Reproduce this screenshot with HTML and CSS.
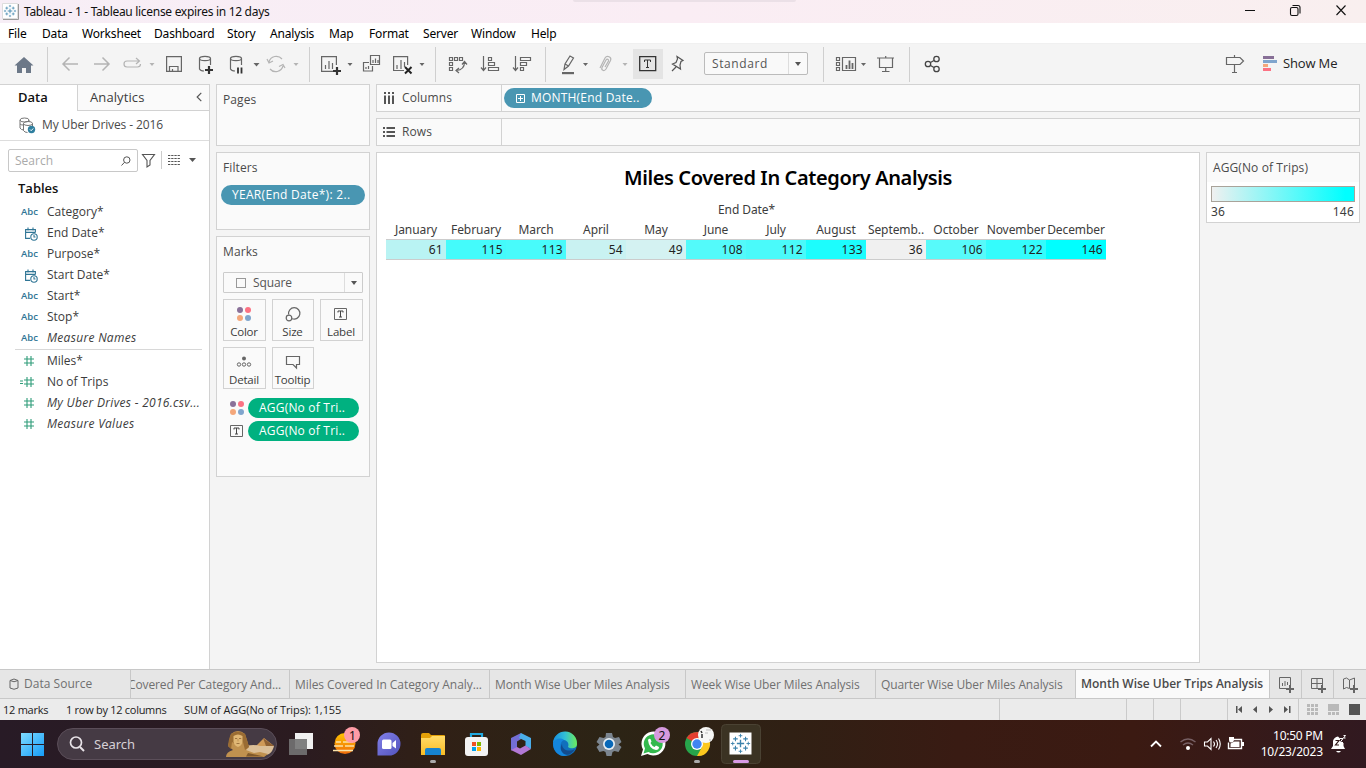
FILE: index.html
```html
<!DOCTYPE html>
<html lang="en">
<head>
<meta charset="utf-8">
<title>Tableau - 1</title>
<link rel="stylesheet" href="styles.css">
</head>
<body>
<svg class="defs" width="0" height="0">
  <defs>
    <symbol id="tableau" viewBox="0 0 24 24"><g fill="none" stroke="#3b82ac" stroke-width="1.500"><path d="M12 8v8M8 12h8"/><path d="M6.500 4.500v5M4 7h5M17.500 4.500v5M15 7h5M6.500 14.500v5M4 17h5M17.500 14.500v5M15 17h5" stroke-width="1.200"/><path d="M12 1.500v4M10 3.500h4M12 18.500v4M10 20.500h4M3.500 10v4M1.500 12h4M20.500 10v4M18.500 12h4" stroke-width="1"/></g></symbol>
    <symbol id="cal" viewBox="0 0 14 14"><g fill="none" stroke="#2f7595" stroke-width="1.100"><path d="M6 11.400H1.600V2.600h9.800v3M1.600 5.400h9.800M4 .5v3M9 .5v3"/><circle cx="10" cy="10" r="3.200"/><path d="M10 8v2h1.500"/></g></symbol>
    <symbol id="hash" viewBox="0 0 12 12"><path d="M4 1v10M8 1v10M1 4h10M1 8h10" stroke="#2f9c79" stroke-width="1.100" fill="none"/></symbol>
    <symbol id="dots" viewBox="0 0 16 16"><circle cx="4" cy="4" r="3" fill="#8a7199"/><circle cx="12" cy="4" r="3" fill="#fc7283"/><circle cx="4" cy="12" r="3" fill="#f4a77b"/><circle cx="12" cy="12" r="3" fill="#80a5cd"/></symbol>
    <symbol id="tbox" viewBox="0 0 14 12"><path d="M.5.5h12v11H.5z" fill="none" stroke="#666"/><path d="M4 4.500v-1.500h5v1.500M6.500 3v6M5 9h3" fill="none" stroke="#444"/></symbol>
  </defs>
</svg>

<header class="titlebar">
  <svg class="app-icon" viewBox="0 0 18 18"><path d="M.5.5h15v15H.5z" fill="#fff" stroke="#ddd"/><path d="M16.500 1v15.500H1" fill="none" stroke="#999"/><use href="#tableau" x="1" y="1" width="14" height="14"/></svg>
  <span class="title">Tableau - 1 - Tableau license expires in 12 days</span>
  <i class="peek"></i>
  <svg class="win" viewBox="1230 0 136 23"><g fill="none" stroke="#111" stroke-width="1.100"><path d="M1245 10.500h10M1336.500 5.500l9 9.500M1345.500 5.500l-9 9.500"/><rect x="1290.500" y="7.500" width="7.500" height="8" rx="1.500"/><path d="M1292.500 5.500h5.500q2 0 2 2v6"/></g></svg>
</header>
<nav class="menu"><span class="m1">File</span><span class="m2">Data</span><span class="m3">Worksheet</span><span class="m4">Dashboard</span><span class="m5">Story</span><span class="m6">Analysis</span><span class="m7">Map</span><span class="m8">Format</span><span class="m9">Server</span><span class="m10">Window</span><span>Help</span></nav>

<div class="toolbar">
  <svg class="tools-a" viewBox="0 43 704 41">
    <path d="M24 57l9.500 8.500H31V73h-5v-5h-4v5h-5v-7.500h-2.500z" fill="#6c7888"/>
    <path d="M47.500 47v35M309.500 47v35M435.500 47v35M545.500 47v35" stroke="#cfcfcf"/>
    <g fill="none" stroke="#b4b4b4" stroke-width="1.500">
      <path d="M78 64H63M69.500 57.500L63 64l6.500 6.500M94 64h15M102.500 57.500L109 64l-6.500 6.500"/>
      <path d="M134 67h3.500a3 3 0 0 0 3-3M127 67a3 3 0 0 1 0-6h12M136 58l3.500 3-3.500 3M127 67h8" stroke-width="1.200"/>
      <path d="M269 62a7.500 7.500 0 0 1 13-3M283 66a7.500 7.500 0 0 1-13 3M267 59l2 4 4-2M285 68l-2-3.500-4 2" stroke-width="1.200"/>
    </g>
    <g fill="#b4b4b4"><path d="M149.500 63h5l-2.500 3zM293.500 63h5l-2.500 3zM622.500 63h5l-2.500 3z"/></g>
    <g fill="#666"><path d="M253.500 63h6l-3 3.500zM347.500 63h5l-2.500 3zM419.500 63h5l-2.500 3zM583 63h5l-2.500 3z"/></g>
    <g fill="none" stroke="#666" stroke-width="1.200">
      <path d="M166.600 56.600h14.800v14.800h-14.800zM169.500 71v-4.500h8.500V71M172.500 69v2"/>
      <ellipse cx="205" cy="58.500" rx="5.500" ry="2.200"/><path d="M199.500 58.500V69q1 2 4.500 2M210.500 58.500V65"/>
      <ellipse cx="236" cy="58.500" rx="5.500" ry="2.200"/><path d="M230.500 58.500V69q1 2 4.500 2M241.500 58.500V65"/>
      <path d="M334 71.400h-12.400V56.600h14.800V65M325.500 65v4M329 61v8M332.500 63v6"/>
      <path d="M370.500 55.500h9v9h-9zM369 62.500h-5.500v8.500h9V66M373 60v3M375.500 58.500V63M378 60v3M366 67v2M368.500 66v3"/>
      <path d="M404 70.500H393.600V56.600h14V65M397 65v4M401 60v9M404.500 62v5"/>
      <path d="M449.500 57.500h3v3h-3zM454.500 57.500h3v3h-3zM459.500 57.500h3v3h-3zM449.500 62.500h3v3h-3zM449.500 67.500h3v3h-3zM464.500 62c0 5-2 8-8 8.500M462 64.500l2.500-3 2.500 3M459 68l-3 2.500 3 2.500"/>
      <path d="M483.500 56v14M481 67.500l2.500 3 2.500-3M488.500 57.500h3v3h-3zM488.500 62.500h6v3h-6zM488.500 67.500h10v3h-10z"/>
      <path d="M515.500 56v14M513 67.500l2.500 3 2.500-3M520.500 57.500h10v3h-10zM520.500 62.500h6v3h-6zM520.500 67.500h3v3h-3z"/>
      <path d="M564 69.500l1-5.500 5-8 3.500 2-5 8zM565 64l3.500 2"/>
      <path d="M600 68l5-10c2-3 7-1 5.500 2.500L606 69c-2 3-5 1-4-1.500l4-7.500c1-1.500 3-.5 2.500 1L605 67" stroke="#b4b4b4"/>
    </g>
    <path d="M562 72h12v2.200h-12z" fill="#666"/>
    <path d="M205 70h8M209 66v8M333 71h8M337 67v8" stroke="#333" stroke-width="2.200"/>
    <path d="M238 67.500v6M241.500 67.500v6" stroke="#333" stroke-width="1.800"/>
    <path d="M405 67l6.500 6.500M411.500 67l-6.500 6.500" stroke="#222" stroke-width="2"/>
    <path d="M633 49h30v30h-30z" fill="#e4e4e4"/>
    <path d="M639.700 56.700h16v14h-16z" fill="none" stroke="#333" stroke-width="1.300"/>
    <path d="M644.500 62v-2h6v2M647.500 60v7.500M646 67.500h3" fill="none" stroke="#333"/>
    <path d="M677 56.500l6 4-2 1-1 3.500.5 4-8-5 3.500-1.500 1.500-3.500zM676 67L672 71" fill="none" stroke="#555" stroke-width="1.200"/>
  </svg>
  <div class="fit"><span>Standard</span><b></b></div>
  <svg class="tools-b" viewBox="808 43 455 41">
    <path d="M823.500 47v35M909.500 47v35" stroke="#cfcfcf"/>
    <g fill="none" stroke="#666" stroke-width="1.200"><path d="M836.500 57.500h3v3h-3zM836.500 62.500h3v3h-3zM836.500 67.500h3v3h-3zM842.500 57.500h13v13h-13z"/><path d="M846.500 65v4M849.500 60.500V69M852.500 63v6" stroke-width="1.800"/><path d="M877 58h17M879.500 58v9.500h13V58M885.700 67.500v4M882 71.500h7.500M885.700 56v2"/><path d="M1226.500 57.500h13.500l3.500 3.500-3.500 3.500h-13.500zM1234.500 55v2.500M1234.500 64.500v8M1232 72.500h5"/></g>
    <path d="M861 63h5l-2.500 3z" fill="#666"/>
    <g fill="none" stroke="#444" stroke-width="1.300"><circle cx="928" cy="64" r="2.700"/><circle cx="936.500" cy="59" r="2.700"/><circle cx="936.500" cy="69" r="2.700"/><path d="M930.500 62.500l3.500-2M930.500 65.500l3.500 2"/></g>
  </svg>
  <svg class="showme-icon" viewBox="0 0 15 15"><path d="M0 0h11v3H0z" fill="#876f96"/><path d="M0 4h14v3H0z" fill="#80a5cd"/><path d="M0 8h5v3H0z" fill="#f4a77b"/><path d="M0 12h8v3H0z" fill="#fc7283"/></svg>
  <span class="showme">Show Me</span>
</div>

<main class="work">
  <aside class="data">
    <div class="side-tabs"><b>Data</b><span>Analytics</span><svg viewBox="0 0 8 12"><path d="M6.500 1L2 5.500l4.500 4.500" fill="none" stroke="#555" stroke-width="1.300"/></svg></div>
    <div class="source"><svg viewBox="0 0 17 17"><g fill="none" stroke="#777"><ellipse cx="5.500" cy="3" rx="4.500" ry="2"/><path d="M1 3v8q1 2 4 2M10 3v2"/><ellipse cx="9" cy="6.500" rx="4.500" ry="2"/><path d="M4.500 6.500v7q1 2 4 2M13.500 6.500v3M1 7q1 1 3 1"/></g><circle cx="12.500" cy="12.500" r="3.700" fill="#2f7f9f"/><path d="M11 12.500l1.200 1.200 2-2.200" fill="none" stroke="#fff"/></svg><span>My Uber Drives - 2016</span></div>
    <div class="find">
      <div class="box"><span>Search</span><svg viewBox="0 0 10 10"><circle cx="5.800" cy="4" r="3.200" fill="none" stroke="#555"/><path d="M3.500 6.300L.5 9.500" stroke="#555"/></svg></div>
      <svg class="find-icons" viewBox="138 149 60 23"><path d="M142.500 154.500h12l-4.500 6v4.500l-3 2v-6.500z" fill="none" stroke="#555" stroke-width="1.100"/><path d="M161.500 151v18" stroke="#ccc"/><path d="M168 155.500h12M168 158.500h12M168 161.500h12M168 164.500h12" stroke="#555" stroke-dasharray="2.300 .9"/><path d="M189 158h7l-3.500 4z" fill="#555"/></svg>
    </div>
    <h2>Tables</h2>
    <ul class="fields">
      <li><em>Abc</em><span>Category*</span></li>
      <li><svg class="cal"><use href="#cal"/></svg><span>End Date*</span></li>
      <li><em>Abc</em><span>Purpose*</span></li>
      <li><svg class="cal"><use href="#cal"/></svg><span>Start Date*</span></li>
      <li><em>Abc</em><span>Start*</span></li>
      <li><em>Abc</em><span>Stop*</span></li>
      <li><em>Abc</em><span class="it">Measure Names</span></li>
    </ul>
    <ul class="fields measures">
      <li><svg class="hash"><use href="#hash"/></svg><span>Miles*</span></li>
      <li><svg class="calc" viewBox="0 0 15 12"><path d="M0 5h3M0 7.500h3" stroke="#2f9c79"/><use href="#hash" x="3" width="12" height="12"/></svg><span>No of Trips</span></li>
      <li><svg class="hash"><use href="#hash"/></svg><span class="it">My Uber Drives - 2016.csv...</span></li>
      <li><svg class="hash"><use href="#hash"/></svg><span class="it">Measure Values</span></li>
    </ul>
  </aside>

  <section class="cards">
    <div class="card pages"><h3>Pages</h3></div>
    <div class="card filters"><h3>Filters</h3><div class="pill blue">YEAR(End Date*): 2..</div></div>
    <div class="card marks"><h3>Marks</h3>
      <div class="type"><i></i><span>Square</span><b></b></div>
      <div class="grid">
        <div><svg viewBox="0 0 16 16"><use href="#dots"/></svg><span>Color</span></div>
        <div><svg viewBox="0 0 16 16"><g fill="none" stroke="#666" stroke-width="1.200"><path d="M3.600 8.500a5.700 5.700 0 1 1 3.500 4.200"/><circle cx="4" cy="12" r="2.800"/></g></svg><span>Size</span></div>
        <div><svg viewBox="0 0 16 16"><use href="#tbox" x="1" y="2" width="14" height="12"/></svg><span>Label</span></div>
        <div><svg viewBox="0 0 16 16"><circle cx="8" cy="4.500" r="2" fill="#666"/><g fill="none" stroke="#666"><circle cx="3" cy="10.500" r="1.700"/><circle cx="8" cy="10.500" r="1.700"/><circle cx="13" cy="10.500" r="1.700"/></g></svg><span>Detail</span></div>
        <div><svg viewBox="0 0 16 16"><path d="M1.500 2.500h13v8h-3v3.500l-3.500-3.500H1.500z" fill="none" stroke="#666" stroke-width="1.200"/></svg><span>Tooltip</span></div>
      </div>
      <div class="enc"><svg width="16" height="16"><use href="#dots"/></svg><div class="pill green">AGG(No of Tri..</div></div>
      <div class="enc"><svg width="16" height="12"><use href="#tbox" x="1" width="14" height="12"/></svg><div class="pill green">AGG(No of Tri..</div></div>
    </div>
  </section>

  <section class="canvas">
    <div class="shelf"><div class="name"><svg viewBox="0 0 12 12"><path d="M2 0v2M2 3.500V12M6 0v2M6 3.500V12M10 0v2M10 3.500V12" stroke="#555" stroke-width="2"/></svg>Columns</div><div class="pill blue month"><svg viewBox="0 0 9 9"><path d="M.5.5h8v8h-8zM4.500 2v5M2 4.500h5" fill="none" stroke="#fff"/></svg>MONTH(End Date..</div></div>
    <div class="shelf"><div class="name"><svg viewBox="0 0 12 12"><path d="M0 2h2M3.500 2H12M0 6h2M3.500 6H12M0 10h2M3.500 10H12" stroke="#555" stroke-width="2"/></svg>Rows</div></div>
    <div class="lower">
      <div class="view">
        <h1>Miles Covered In Category Analysis</h1>
        <div class="viz">
          <p>End Date*</p>
          <div class="row heads"><span>January</span><span>February</span><span>March</span><span>April</span><span>May</span><span>June</span><span>July</span><span>August</span><span>Septemb..</span><span>October</span><span>November</span><span>December</span></div>
          <div class="row cells"><span style="background:#b9f3f3">61</span><span style="background:#44fbfb">115</span><span style="background:#48fbfb">113</span><span style="background:#c9f2f2">54</span><span style="background:#d4f2f2">49</span><span style="background:#53fafa">108</span><span style="background:#4afafa">112</span><span style="background:#1cfdfd">133</span><span style="background:#f0f0f0">36</span><span style="background:#57fafa">106</span><span style="background:#34fcfc">122</span><span style="background:#00ffff">146</span></div>
        </div>
      </div>
      <div class="legend"><h3>AGG(No of Trips)</h3><div class="scale"><i></i><div><span>36</span><span>146</span></div></div></div>
    </div>
  </section>
</main>

<div class="sheets">
  <div class="ds"><svg viewBox="0 0 10 12"><path d="M1 2.500V10q4 2.500 8 0V2.500M1 2.500Q5-.5 9 2.500 5 5 1 2.500" fill="none" stroke="#666"/></svg>Data Source</div>
  <div class="s1"><span>Covered Per Category And...</span></div>
  <div class="s2"><span>Miles Covered In Category Analy...</span></div>
  <div class="s3"><span>Month Wise Uber Miles Analysis</span></div>
  <div class="s4"><span>Week Wise Uber Miles Analysis</span></div>
  <div class="s5"><span>Quarter Wise Uber Miles Analysis</span></div>
  <div class="s6"><b>Month Wise Uber Trips Analysis</b></div>
  <div class="add"><svg viewBox="0 0 16 16"><path d="M8 11.500H1.500v-11h11V8M4.500 6v3M7 4v5M9.500 5v3" fill="none" stroke="#666"/><path d="M8 12h8M12 8v8" stroke="#666" stroke-width="2"/></svg></div>
  <div class="add"><svg viewBox="0 0 16 16"><path d="M8 11.500H1.500v-10h11V8M1.500 6.500h11M7 1.500v10" fill="none" stroke="#666"/><path d="M8 12h8M12 8v8" stroke="#666" stroke-width="2"/></svg></div>
  <div class="add"><svg viewBox="0 0 16 16"><path d="M7.500 11.500l-3-1-3 1.500V2l3-1 3 2 5-2v7M7.500 3v8.500" fill="none" stroke="#666"/><path d="M8 12h8M12 8v8" stroke="#666" stroke-width="2"/></svg></div>
</div>
<div class="status"><span class="a">12 marks</span><span class="b">1 row by 12 columns</span><span class="c">SUM of AGG(No of Trips): 1,155</span>
  <svg viewBox="999 699 367 21"><path d="M999.500 699v21M1126.500 699v21M1153.500 699v21M1180.500 699v21M1227.500 699v21M1298.500 699v21" stroke="#cacaca"/><g fill="#555"><path d="M1236 706h1.500v7h-1.500zM1242 706v7l-4-3.500zM1257 706v7l-4-3.500zM1269 706v7l4-3.500zM1284 706v7l4-3.500zM1289 706h1.500v7h-1.500z"/><path d="M1349 704h11v11h-11z"/></g><g fill="#b9b9b9"><path d="M1307 704h3v3h-3zM1311 704h3v3h-3zM1315 704h3v3h-3zM1307 708h3v3h-3zM1311 708h3v3h-3zM1315 708h3v3h-3zM1307 712h3v3h-3zM1311 712h3v3h-3zM1315 712h3v3h-3zM1328 704h11v7h-11zM1328 712h3v3h-3zM1332 712h3v3h-3zM1336 712h3v3h-3z"/></g></svg>
</div>

<footer class="taskbar">
  <svg class="start" viewBox="0 720 57 48"><defs><linearGradient id="w" x1="0" y1="0" x2="1" y2="1"><stop offset="0" stop-color="#7fdcff"/><stop offset="1" stop-color="#159cf8"/></linearGradient></defs><path d="M21 733h11v11H21zM33 733h11v11H33zM21 745h11v11H21zM33 745h11v11H33z" fill="url(#w)"/></svg>
  <div class="tsearch"><svg viewBox="0 0 16 16"><circle cx="7" cy="6.500" r="5.500" fill="none" stroke="#e8e3e8" stroke-width="1.700"/><path d="M11 11l4 4" stroke="#e8e3e8" stroke-width="2"/></svg><span>Search</span>
    <svg class="sphinx" viewBox="226 730 48 28"><path d="M256 746l8-8 10 8z" fill="#cf9a58"/><path d="M263 738l11 8h-8z" fill="#8f6133"/><path d="M246 746q8-2 14 0h14q-1 5-5 8l-6 2h-19z" fill="#dbbf98"/><path d="M226 757q0-5 7-7l-5-4 3-12q7-6 14 0l4 13-3 3 8 3 6-1 8 2-4 3z" fill="#c0914f"/><path d="M228 746q1-9 3-12 7-5 14 0 2 5 4 13l-4 3-2-8-5 4-6-4-1 7z" fill="#9a6c33"/><path d="M233.500 736q4.500-3 9 0v6q-1 4-4.500 5-3.500-1-4.500-5z" fill="#e0b775"/><path d="M235 738.500h2.200M239 738.500h2.200M236.500 743.500h3" stroke="#8d6231" stroke-width=".8"/><path d="M238 739v2.500" stroke="#b88a4a" stroke-width=".8"/><path d="M248 753l16 3.500h-18z" fill="#80592a"/></svg></div>
  <svg class="apps" viewBox="277 720 500 48">
    <defs>
      <linearGradient id="o" x1="0" y1="0" x2="0" y2="1"><stop offset="0" stop-color="#ffc400"/><stop offset="1" stop-color="#ef6b0a"/></linearGradient>
      <linearGradient id="c" x1="0" y1="0" x2="1" y2="1"><stop offset="0" stop-color="#8280e8"/><stop offset="1" stop-color="#5253bd"/></linearGradient>
      <linearGradient id="f" x1="0" y1="0" x2="0" y2="1"><stop offset="0" stop-color="#ffdb68"/><stop offset="1" stop-color="#f8bc25"/></linearGradient>
      <linearGradient id="e" x1="0" y1="0" x2="1" y2="0"><stop offset="0" stop-color="#168ee0"/><stop offset=".5" stop-color="#32bfd5"/><stop offset="1" stop-color="#6cec5b"/></linearGradient>
    </defs>
    <path d="M295 733h18v16h-18z" fill="#f1f1f1"/><path d="M289 739h18v16h-18z" fill="#737373" fill-opacity=".9"/>
    <circle cx="345" cy="743.500" r="10.500" fill="url(#o)"/><path d="M334 746h9M345 746h9M333 750.500h20M336 742h5M343 742h10" stroke="#fbe2a7" stroke-width="1.500"/>
    <circle cx="352" cy="735" r="8" fill="#ff9ca6"/><text x="352.500" y="739.500" class="badge">1</text>
    <path d="M377.500 755.500V744a11.500 11.500 0 1 1 11.500 11.500z" fill="url(#c)"/><rect x="382" y="739.500" width="9.500" height="9.500" rx="1.500" fill="#fff"/><path d="M392.500 743l3.500-3v8.500l-3.500-2.500z" fill="#fff"/>
    <path d="M421 735q0-2 2-2h6l2 2h13q1 0 1 1v4h-24z" fill="#e3a008"/><path d="M421 738h9l2-2h13v19h-24z" fill="url(#f)"/><path d="M425 755v-5q0-2 2-2h12q2 0 2 2v5z" fill="#1683cf"/><rect x="430" y="760" width="6" height="3" rx="1.500" fill="#aaa"/>
    <path d="M471 738v-4h11v4" fill="none" stroke="#20a9e0" stroke-width="2.200"/><rect x="465" y="737" width="23" height="19" rx="3" fill="#f3f3f3"/><path d="M472 742h4v4h-4z" fill="#ef5123"/><path d="M477 742h4v4h-4z" fill="#7fb800"/><path d="M472 747h4v4h-4z" fill="#00a0ec"/><path d="M477 747h4v4h-4z" fill="#ffb400"/>
    <path d="M511 738l10-5v6l-4 2.500v7l-6 2z" fill="#736ed5"/><path d="M521 733l10 5v11l-5.500-3v-5l-6.500-3z" fill="#4aaeea"/><path d="M511 750l6-3 3 1.500 5.500-3 5.500 3.500-10 6z" fill="#b278d5"/>
    <circle cx="565" cy="744" r="12" fill="#1070bd"/><path d="M553 743a12 12 0 0 1 24 1c0 5-7 5-9 3 2-5-3-8-7-7-4 0-7 1-8 3" fill="url(#e)"/><path d="M553 743c2-4 7-6 11-3-5 2-5 10 3 15.500-8 2-14-4-14-12.500" fill="#1486dd"/><path d="M562 744c0 7 8 8 13 5-3 5-7 7-11 5-4-3-4-7-2-10" fill="#124b8d"/>
    <path d="M606 733h6l1 4 2 1 4-1 2.500 5-3 2.500 3 2.500-3 5-4-1-2 1-1 4h-5l-1-4-2-1-4 1-3-5 3-2.500-3-2.500 3-5 4 1 2-1z" fill="#7b858f"/><circle cx="609" cy="744" r="6" fill="#e6edf2"/><circle cx="609" cy="744" r="4.300" fill="#0868b8"/>
    <path d="M641 756l2-6.500a12 12 0 1 1 4.500 4.500z" fill="#fff"/><path d="M643.500 753.500l1.500-5a9.500 9.500 0 1 1 3.500 3.500z" fill="#34b94e"/><path d="M648 740q1-2 2.500-1l1 2.500-1 1.500q1.500 3 4 4l1.500-1.500 3 1.500q0 3-3 3-7-1-8-10" fill="#fff"/>
    <circle cx="662" cy="735" r="8" fill="#d69adf"/><text x="662" y="739.500" class="badge">2</text>
    <circle cx="697" cy="744" r="12" fill="#27a54b"/><path d="M697 744l-10.400-6a12 12 0 0 1 20.800 0z" fill="#e43e2f"/><path d="M697 738h11.400a12 12 0 0 1-11.400 18l5-9z" fill="#fdc81e"/><circle cx="697" cy="744" r="6" fill="#fff"/><circle cx="697" cy="744" r="4.700" fill="#4185f3"/><circle cx="706" cy="735" r="8" fill="#f7f7f5"/><path d="M701 731l1 2M702 734v4" stroke="#333" stroke-width="1.500"/><path d="M706 730h5M705 733h3M709 740h2" stroke="#bbb" fill="none"/><rect x="694" y="760" width="6" height="3" rx="1.500" fill="#aaa"/>
    <rect x="721.500" y="724.500" width="39" height="39" rx="4" fill="#3b3323" stroke="#4a4233"/><path d="M729.500 732.500h22v22h-22z" fill="#fff"/><use href="#tableau" x="729.500" y="732.500" width="22" height="22"/><rect x="733" y="760" width="16" height="3" rx="1.500" fill="#d99be6"/>
  </svg>
  <svg class="tray" viewBox="1140 720 110 48"><g fill="none" stroke="#fff" stroke-width="1.400"><path d="M1151 746.500l5-5 5 5" stroke-width="1.800"/><g stroke="#776064"><path d="M1180.500 742q7.500-6 15 0M1183 745q5-4 10 0"/></g><path d="M1204.500 742h3l3.500-3.500v11l-3.500-3.500h-3zM1213.500 741.500q2 2.500 0 5M1216 740q3 4 0 8M1218.500 738.500q3.500 5.500 0 11" stroke-width="1.100"/><path d="M1234 739.500h7.500v9h-13v-6" /></g><circle cx="1188" cy="748" r="2" fill="#fff"/><path d="M1230.500 747v-3.500l4-2h5v5.500zM1242 742h2v4h-2zM1229 737h5v3q0 2-2.500 2.500T1229 740z" fill="#fff"/></svg>
  <div class="clock"><span>10:50 PM</span><span class="date">10/23/2023</span></div>
  <svg class="bell" viewBox="1331 734 17 20"><path d="M1331 749l2-3v-5q1-4 5-4.500l2 2v4.500h3.500v3l1.500 3zM1336 751h5q-2.500 3-5 0" fill="#fff"/><path d="M1335.500 740.500h3.500l-3.500 4.500h3.500" fill="none" stroke="#331a1a" stroke-width="1.200"/><path d="M1340 738.500h3l-3 4h3M1343.500 735.500h2l-2 2.500h2" fill="none" stroke="#fff"/></svg>
</footer>
</body>
</html>
```
FILE: styles.css
```css
* { box-sizing: border-box; }
body { margin: 0; width: 1366px; height: 768px; overflow: hidden; display: flex; flex-direction: column; background: #f4f4f4; color: #3c3c3c; font: 12px/16px "Open Sans", "Noto Sans", sans-serif; }
.defs { position: absolute; }
svg { display: block; flex: none; }
h1, h2, h3, p, ul { margin: 0; padding: 0; font-size: 12px; font-weight: 400; }
span, b, div { white-space: nowrap; }

.titlebar { height: 23px; display: flex; align-items: flex-start; background: linear-gradient(90deg, #f7eef6, #faedf4 50%, #f9efef); color: #111; }
.app-icon { width: 18px; height: 18px; margin: 3px 0 0 2px; }
.title { margin: 4px 0 0 4px; width: 549px; font-family: "Noto Sans", sans-serif; font-size: 12px; letter-spacing: -.3px; }
.peek { width: 223px; height: 2px; background: #ebe0e7; border-radius: 0 0 6px 6px; }
.win { width: 136px; height: 23px; margin-left: auto; }

.menu { height: 20px; display: flex; background: #fff; color: #000; padding-left: 8px; font: 12px/21px "Noto Sans", sans-serif; letter-spacing: -.18px; }
.m1 { width: 34px; } .m2 { width: 40px; } .m3 { width: 72px; } .m4 { width: 73px; } .m5 { width: 43px; } .m6 { width: 59px; } .m7 { width: 40px; } .m8 { width: 54px; } .m9 { width: 48px; } .m10 { width: 60px; }

.toolbar { height: 41px; display: flex; border-top: 1px solid #f0f0f0; }
.toolbar svg { margin-top: -1px; }
.tools-a { width: 704px; height: 41px; }
.tools-b { width: 455px; height: 41px; }
.fit { width: 104px; height: 23px; margin-top: 8px; display: flex; align-items: center; border: 1px solid #bbb; border-radius: 2px; background: #f9f9f9; color: #555; }
.fit span { padding-left: 7px; flex: 1; letter-spacing: .6px; }
.fit b, .type b { width: 19px; height: 100%; display: flex; align-items: center; justify-content: center; border-left: 1px solid #ddd; }
.fit b::before, .type b::before { content: ""; border: 3px solid transparent; border-top: 4px solid #555; border-bottom: 0; }
.toolbar .showme-icon { width: 15px; height: 15px; margin-top: 12px; }
.showme { margin: 11px 0 0 5px; font-size: 13px; color: #222; letter-spacing: -.15px; }

.work { height: 585px; display: flex; }
.data { width: 210px; background: #fff; border-right: 1px solid #d2d2d2; border-top: 1px solid #d2d2d2; }
.side-tabs { height: 26px; display: flex; font-size: 13px; line-height: 25px; }
.side-tabs b { width: 77px; padding-left: 18px; color: #111; font-size: 13px; font-weight: 600; }
.side-tabs span { width: 114px; padding-left: 12px; border-left: 1px solid #d2d2d2; border-bottom: 1px solid #d2d2d2; background: #fafafa; letter-spacing: .1px; }
.side-tabs svg { width: 18px; height: 26px; padding: 7px 6px 7px 4px; background: #fafafa; border-bottom: 1px solid #d2d2d2; }
.source { height: 30px; display: flex; align-items: center; padding-left: 19px; border-bottom: 1px solid #ddd; color: #4a4a4a; }
.source svg { width: 17px; height: 17px; margin-right: 6px; }
.source span { letter-spacing: -.12px; margin-top: -1px; }
.find { display: flex; padding: 8px 0 0 8px; }
.box { width: 130px; height: 23px; display: flex; align-items: center; justify-content: space-between; border: 1px solid #c8c8c8; border-radius: 2px; padding: 0 6px; color: #aaa; }
.box svg { width: 10px; height: 10px; }
.find-icons { width: 60px; height: 23px; }
.data h2 { margin: 8px 0 5px 18px; font-size: 13px; line-height: 16px; font-weight: 600; color: #111; }
.fields { list-style: none; }
.fields li { height: 21px; display: flex; align-items: center; }
.fields li > :first-child { width: 18px; margin: 1px 8px 0 21px; }
.fields em { font: 600 9.500px/16px "Open Sans", sans-serif; color: #2f7595; }
.fields span { letter-spacing: 0; margin-top: 1px; }
.fields .cal { height: 14px; width: 14px !important; margin: 2px 9px 0 24px !important; }
.fields .hash { height: 12px; width: 12px !important; margin: 0 12px 0 23px !important; }
.fields .calc { height: 12px; width: 15px !important; margin: 0 12px 0 20px !important; }
.fields .it { font-style: italic; letter-spacing: .3px; }
.measures { margin: 0 7px 0 0; background: linear-gradient(#d8d8d8, #d8d8d8) 15px 1px / 187px 1px no-repeat; padding-top: 2px; }

.cards { width: 166px; padding-left: 6px; display: flex; flex-direction: column; gap: 6px; }
.card { width: 154px; background: #fafafa; border: 1px solid #d2d2d2; padding: 7px 6px 0; }
h3 { line-height: 16px; color: #4a4a4a; letter-spacing: .1px; }
.pages { height: 62px; } .filters { height: 78px; } .marks { height: 241px; }
.pill { height: 20px; border-radius: 10px; color: #fff; line-height: 20px; padding-left: 11px; font-weight: 500; letter-spacing: .2px; }
.blue { background: #4996b2; } .green { background: #00b180; }
.filters .pill { width: 144px; margin: 9px 0 0 -2px; letter-spacing: .3px; }
.type { width: 140px; height: 21px; margin-top: 12px; display: flex; align-items: center; border: 1px solid #ccc; border-radius: 1px; color: #555; }
.type i { width: 10px; height: 10px; border: 1px solid #999; margin: 0 7px 0 12px; }
.type span { flex: 1; margin-top: 1px; letter-spacing: -.1px; }
.type b { width: 18px; }
.grid { display: grid; grid-template-columns: 43px 42px 43px; column-gap: 6px; row-gap: 6px; margin-top: 6px; }
.grid div { height: 42px; border: 1px solid #d2d2d2; display: flex; flex-direction: column; align-items: center; padding: 6px 1px 0 0; }
.grid svg { width: 16px; height: 16px; }
.grid span { line-height: 20px; font-size: 11.500px; letter-spacing: -.2px; }
.enc { display: flex; align-items: center; margin: 9px 0 -6px 6px; gap: 3px; }
.enc .pill { width: 111px; }

.canvas { width: 984px; display: flex; flex-direction: column; gap: 6px; }
.shelf { height: 28px; border: 1px solid #d2d2d2; background: #fafafa; display: flex; align-items: center; }
.shelf .name { width: 125px; height: 26px; border-right: 1px solid #d2d2d2; display: flex; align-items: center; gap: 7px; padding-left: 6px; color: #4a4a4a; letter-spacing: .1px; }
.name svg { width: 12px; height: 12px; }
.month { width: 148px; margin-left: 2px; display: flex; align-items: center; padding-left: 12px; gap: 6px; }
.month svg { width: 9px; height: 9px; }
.lower { display: flex; gap: 6px; align-items: flex-start; }
.view { width: 824px; height: 511px; border: 1px solid #d2d2d2; background: #fff; font-family: "Noto Sans", sans-serif; }
.view h1 { margin-top: 11px; text-align: center; font-size: 20px; line-height: 28px; font-weight: 600; color: #000; letter-spacing: -.38px; }
.viz { width: 720px; margin: 9px 0 0 9px; }
.viz p { text-align: center; line-height: 18px; letter-spacing: -.1px; padding-left: 1px; }
.row { display: grid; grid-template-columns: repeat(12, 60px); line-height: 20px; }
.heads { text-align: center; line-height: 22px; height: 20px; letter-spacing: -.08px; }
.heads span { display: flex; justify-content: center; }
.cells { border-top: 1px solid #ccc; border-bottom: 1px solid #ccc; height: 21px; line-height: 20px; text-align: right; font-size: 12px; letter-spacing: .3px; color: #222; }
.cells span { padding-right: 3px; height: 19px; }
.legend { width: 154px; height: 71px; border: 1px solid #d2d2d2; background: #fafafa; }
.legend h3 { height: 29px; padding: 7px 6px; }
.scale { height: 40px; background: #fff; padding: 4px 4px 0; }
.scale i { display: block; height: 16px; border: 1px solid #a9a39a; background: linear-gradient(90deg, #f0f0f0, #0ff 94%); }
.scale div { display: flex; justify-content: space-between; font-family: "Noto Sans", sans-serif; line-height: 19px; letter-spacing: .2px; padding-right: 1px; }

.sheets { height: 30px; display: flex; border-top: 1px solid #c8c8c8; border-bottom: 1px solid #c8c8c8; background: #e6e6e6; color: #707070; line-height: 30px; letter-spacing: -.12px; }
.sheets > div { border-left: 1px solid #c8c8c8; padding-left: 5px; overflow: hidden; }
.sheets .ds { width: 130px; display: flex; align-items: center; gap: 5px; padding-left: 9px; border-left: 0; letter-spacing: .02px; }
.ds svg { width: 10px; height: 12px; }
.sheets .s1 { width: 159px; padding-left: 0; }
.s1 span { margin-left: -3px; }
.s2 { width: 200px; letter-spacing: -.06px; } .s3 { width: 196px; } .s4 { width: 190px; } .s5 { width: 200px; }
.sheets .s6 { width: 194px; background: #fafafa; line-height: 28px; color: #4a4a4a; letter-spacing: -.02px; }
.s6 b { font-weight: 600; }
.add { width: 32px; }
.add svg { width: 16px; height: 16px; margin: 7px 0 0 3px; }
.status { height: 21px; display: flex; background: #ebebeb; font-size: 11px; line-height: 22px; color: #222; padding-left: 3px; }
.status .a { width: 63px; letter-spacing: -.25px; } .status .b { width: 118px; letter-spacing: -.28px; } .status .c { width: 815px; letter-spacing: -.07px; }
.status svg { width: 367px; height: 21px; }

.taskbar { height: 48px; display: flex; background: linear-gradient(90deg, #281b26, #2b1b20 22%, #302016 32%, #2c2415 45%, #302014 58%, #391b13 70%, #3b1a12 83%, #311920); color: #fff; font-family: "Noto Sans", sans-serif; }
.start { width: 57px; height: 48px; }
.tsearch { width: 220px; height: 32px; margin-top: 8px; border: 1px solid #5b4e59; border-radius: 16px; background: #453a44; display: flex; align-items: center; padding-left: 11px; color: #d6d0d5; font-size: 13px; }
.tsearch svg { width: 16px; height: 16px; margin-right: 9px; }
.tsearch .sphinx { width: 48px; height: 28px; margin: 0 2px 0 auto; }
.apps { width: 500px; height: 48px; }
.badge { font: 12px "Noto Sans", sans-serif; fill: #111; text-anchor: middle; }
.tray { width: 110px; height: 48px; margin-left: 363px; }
.clock { width: 73px; display: flex; flex-direction: column; align-items: flex-end; padding-top: 8px; letter-spacing: -.25px; font-size: 12px; }
.clock .date { letter-spacing: -.15px; }
.bell { width: 17px; height: 20px; margin: 14px 0 0 8px; }
```
